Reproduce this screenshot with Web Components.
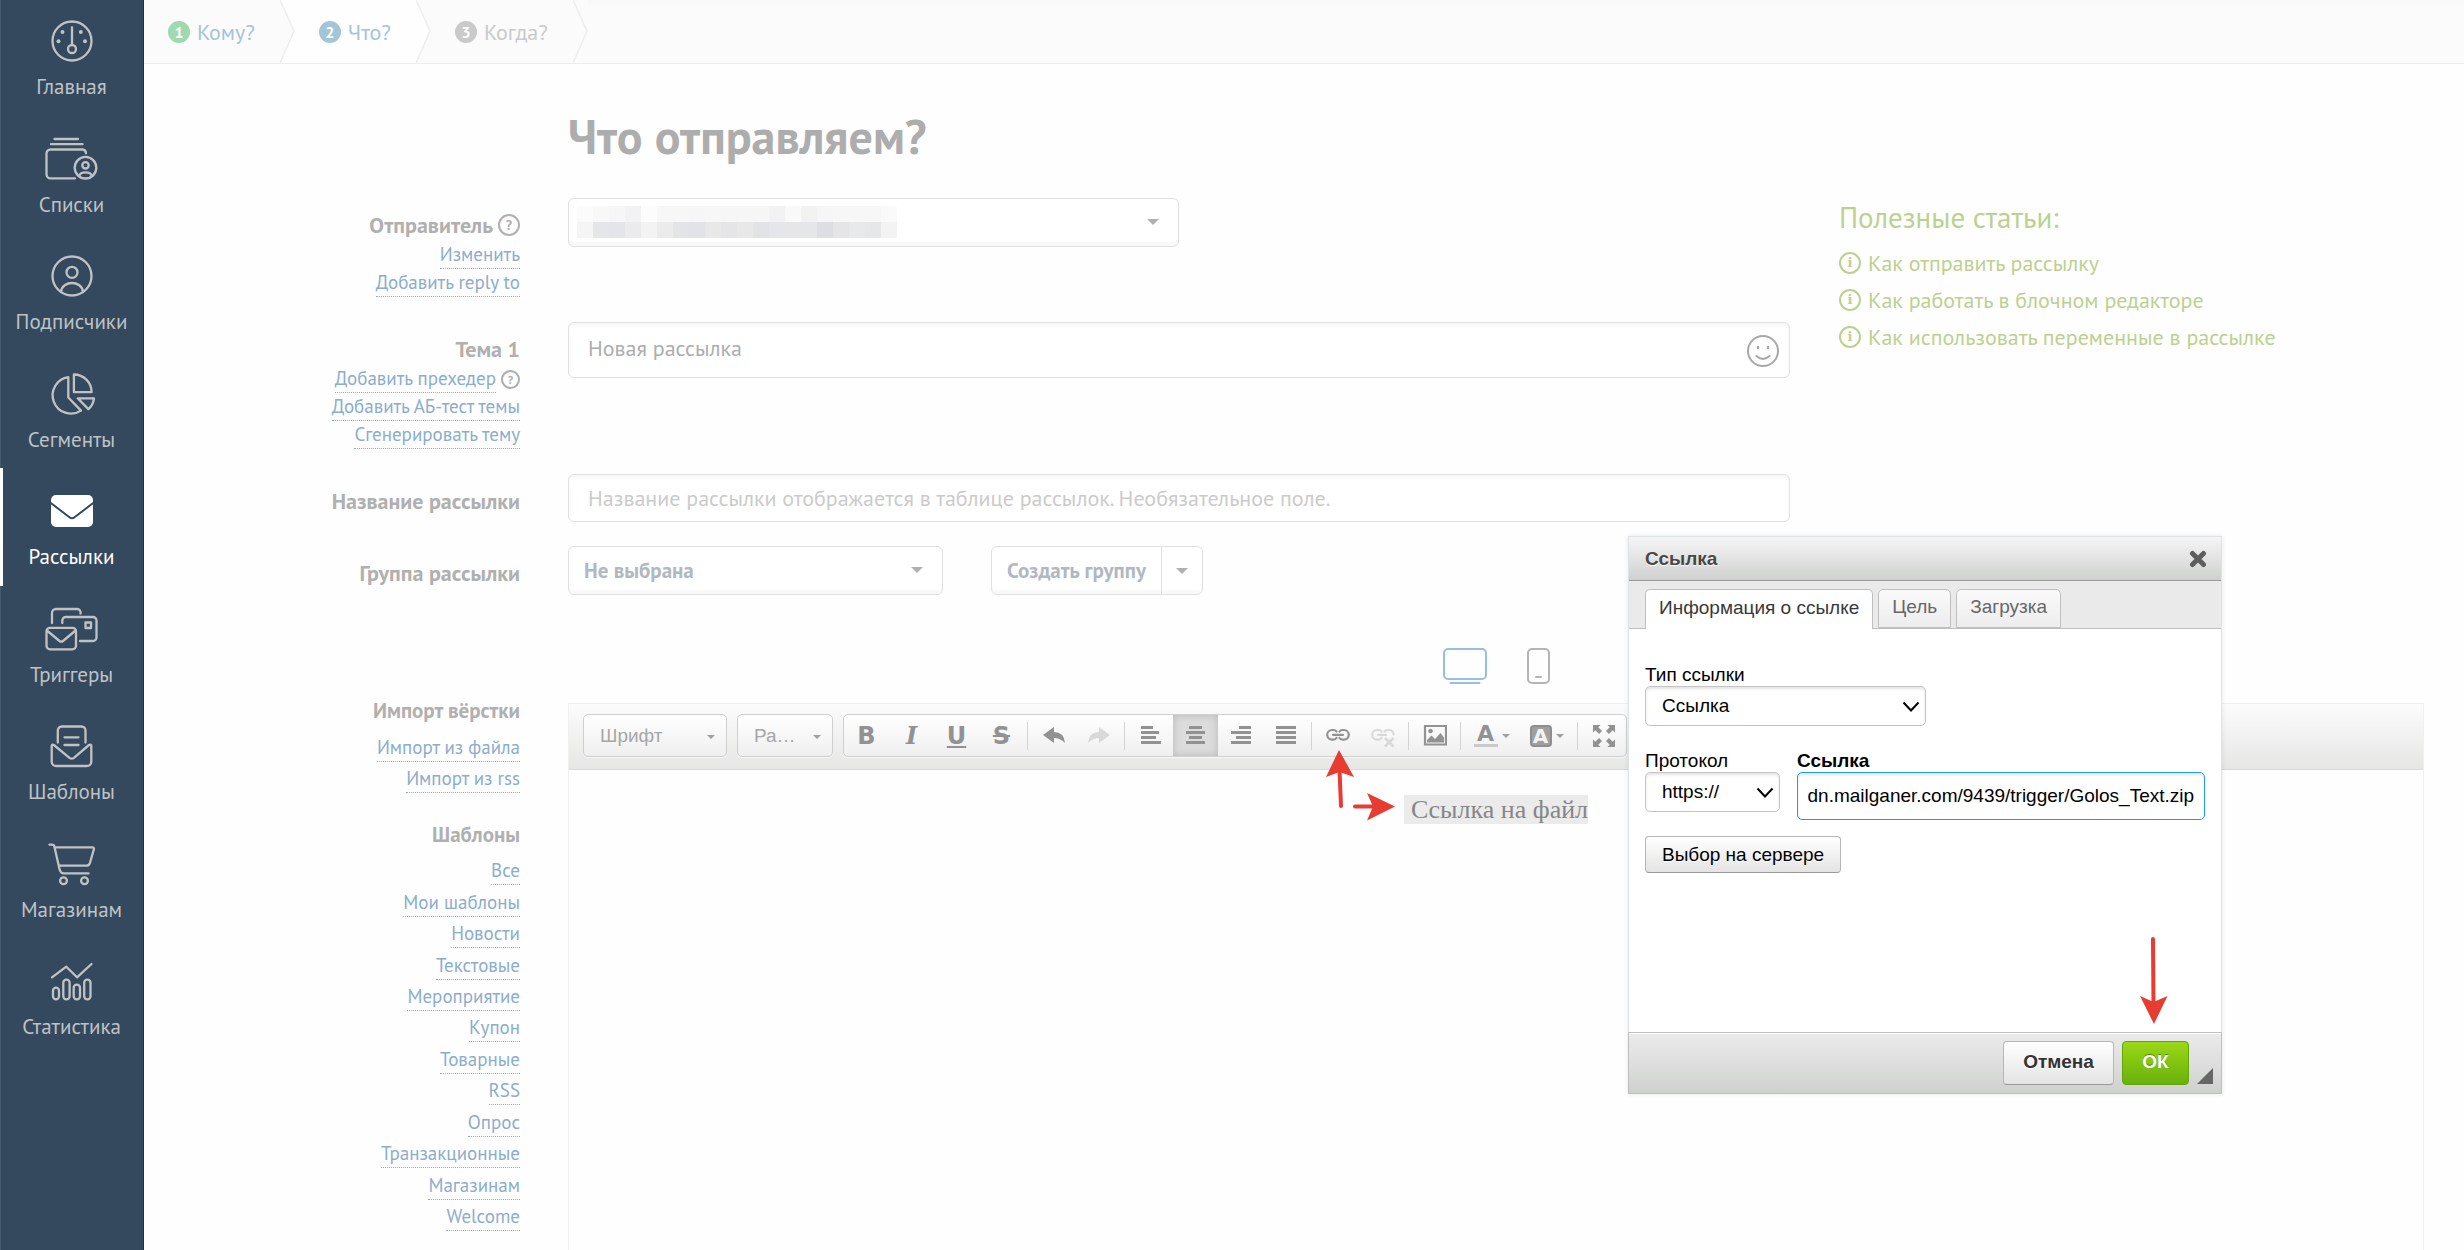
<!DOCTYPE html>
<html lang="ru">
<head>
<meta charset="utf-8">
<title>Что отправляем?</title>
<style>
  html, body { margin: 0; height: 100%; }
  body {
    overflow: hidden;
    background: #fefefe;
    color: #adadad;
    font-family: "PT Sans", "Open Sans", "Noto Sans", sans-serif;
    font-size: 21px;
  }
</style>
</head>
<body>
<mail-app></mail-app>

<script>
const define = (name, html, setup) => {
  const template = document.createElement('template');
  template.innerHTML = html;
  customElements.define(name, class extends HTMLElement {
    constructor() {
      super();
      this.attachShadow({ mode: 'open' }).append(template.content.cloneNode(true));
    }
    connectedCallback() { if (setup) setup(this, this.shadowRoot); }
  });
};

/* ---------- sidebar ---------- */
const navIcons = {
  home: '<circle cx="28" cy="23" r="19.5"/><path d="M28 9.5V27"/><circle cx="28" cy="31" r="4"/><g fill="currentColor" stroke="none"><circle cx="18.5" cy="14" r="2"/><circle cx="36.8" cy="14" r="2"/><circle cx="14.5" cy="23.3" r="2"/><circle cx="41" cy="23.3" r="2"/></g>',
  lists: '<path d="M10.500 3H34M7 8.200H38.500M31 42.300H6.500a4 4 0 0 1-4-4V17.500a4 4 0 0 1 4-4H38.500a4 4 0 0 1 3.500 3.800"/><circle cx="41.500" cy="31.700" r="10.800"/><circle cx="41.500" cy="29.300" r="3.200"/><path d="M35.500 39.500c1-4.200 11-4.200 12 0"/>',
  people: '<circle cx="28" cy="23" r="19.500"/><circle cx="28" cy="19.300" r="5.500"/><path d="M17 39c1-12 21-12 22 0"/>',
  segments: '<path d="M24.300 6.200V26.500L37 39.600A18.300 18.300 0 1 1 24.300 6.200z"/><path d="M29.900 3.500V21.200H47.600A17.700 17.700 0 0 0 29.900 3.500z"/><path d="M33.700 27.300H50a17 17 0 0 1-5.600 10.800z"/>',
  mail: '<rect x="7" y="7" width="42" height="32" rx="5" fill="currentColor" stroke="none"/><path d="M5.500 14L25.500 29.300q2.500 1.700 5 0L50.500 14" stroke="#34495e" stroke-width="2"/>',
  triggers: '<path d="M8 17V7a4 4 0 0 1 4-4H33a3.500 3.500 0 0 1 3.500 4.500M18.300 17V14.500a3.500 3.500 0 0 1 3.500-3.500H49a3.500 3.500 0 0 1 3.500 3.500V31.500a3.500 3.500 0 0 1-3.500 3.500H36"/><rect x="41.500" y="16.500" width="5.500" height="5.500"/><rect x="2.500" y="21.800" width="29.500" height="21.500" rx="3.500"/><path d="M3.500 25L15.500 35q1.800 1.300 3.500 0L31 25"/>',
  templates: '<path d="M13.800 19.500V7.500a4 4 0 0 1 4-4H37.500a4 4 0 0 1 4 4V19.500M20.500 14.300H34.500M20.500 22H34.500"/><path d="M7.700 23c0-1.500 1.200-1.800 2.200-1L25.500 34.800q2.200 1.700 4.400 0L45 22c1-.8 2.300-.5 2.300 1V38.500a4.500 4.500 0 0 1-4.500 4.500H12.200a4.500 4.500 0 0 1-4.500-4.500z"/>',
  shop: '<path d="M5.500 3.700H8c1.500 0 2.200.8 2.500 2.300L15.300 27.300c.8 4 2 5.100 4.500 5.100H44.500M11 6.300H48.500a1.500 1.500 0 0 1 1.400 2L46 21.800c-.7 2.200-1.500 2.900-3.500 2.900H15"/><circle cx="19.500" cy="39.700" r="3.400"/><circle cx="40.500" cy="39.700" r="3.400"/>',
  stats: '<path d="M8 19.300L22.300 8.700L33 19.300L47.500 6"/><rect x="9" y="29.700" width="6" height="11.600" rx="3"/><rect x="19.300" y="21.700" width="6.300" height="19.600" rx="3"/><rect x="29.700" y="26.700" width="6.300" height="14.600" rx="3"/><rect x="40.200" y="21.700" width="6.300" height="19.600" rx="3"/>'
};

define('nav-item', `
<style>
  :host { display: block; }
  a {
    box-sizing: border-box; height: 100%; padding-top: 20px;
    display: flex; flex-direction: column; align-items: center; gap: 11px;
    color: #bfc3c5; text-decoration: none; line-height: 24px;
  }
  svg { flex: none; width: 56px; height: 46px; fill: none; stroke: currentColor; stroke-width: 2.3; stroke-linecap: round; stroke-linejoin: round; }
  :host([active]) a { color: #fff; box-shadow: inset 3px 0 #fff; }
</style>
<a href="#"><svg viewBox="0 0 56 46" aria-hidden="true"></svg><slot></slot></a>`,
(host, root) => { root.querySelector('svg').innerHTML = navIcons[host.getAttribute('icon')]; });

define('app-sidebar', `
<style>
  :host { display: block; flex: none; width: 144px; box-sizing: border-box; background: #34495e; border-right: 1px solid #1f2f40; box-shadow: inset 1px 0 #475b6f; overflow: hidden; }
  nav { display: grid; grid-template-rows: repeat(9, 1fr); height: 1058px; margin-top: -2px; }
</style>
<nav aria-label="Разделы">
  <nav-item icon="home">Главная</nav-item>
  <nav-item icon="lists">Списки</nav-item>
  <nav-item icon="people">Подписчики</nav-item>
  <nav-item icon="segments">Сегменты</nav-item>
  <nav-item icon="mail" active>Рассылки</nav-item>
  <nav-item icon="triggers">Триггеры</nav-item>
  <nav-item icon="templates">Шаблоны</nav-item>
  <nav-item icon="shop">Магазинам</nav-item>
  <nav-item icon="stats">Статистика</nav-item>
</nav>`);

/* ---------- wizard steps ---------- */
define('wizard-step', `
<style>
  :host { display: flex; align-items: stretch; height: 63px; --ink: #a3c5d9; --badge: var(--ink); --fill: #fbfbfb; background: var(--fill); }
  :host([state="done"]) { --badge: #9ed9b0; }
  :host([state="current"]) { --fill: #fefefe; }
  :host([state="next"]) { --ink: #cacaca; }
  a { display: flex; align-items: center; gap: 7px; padding: 0 25px 0 24px; color: var(--ink); text-decoration: none; font-size: 22px; }
  b { width: 22px; height: 22px; border-radius: 50%; background: var(--badge); color: #fff; font-size: 16px; line-height: 22px; text-align: center; }
  svg { flex: none; width: 15px; height: 63px; background: var(--after, #fbfbfb); }
  :host([state="done"]) { --after: #fefefe; }
  path { fill: var(--fill); stroke: #ededed; stroke-width: 1.5; }
</style>
<a href="#"><b></b><slot></slot></a>
<svg viewBox="0 0 15 63" aria-hidden="true"><path d="M-2 -2L0 0L14 31L0 63L-2 65"/></svg>`,
(host, root) => { root.querySelector('b').textContent = host.getAttribute('number'); });

define('wizard-steps', `
<style>
  :host { display: block; background: linear-gradient(#f7f7f7, #fbfbfb 8px); border-bottom: 1px solid #eee; }
  nav { display: flex; }
</style>
<nav aria-label="Шаги">
  <wizard-step number="1" state="done">Кому?</wizard-step>
  <wizard-step number="2" state="current">Что?</wizard-step>
  <wizard-step number="3" state="next">Когда?</wizard-step>
</nav>`);

/* ---------- small shared parts ---------- */
define('dotted-link', `
<style>
  :host { display: flex; justify-content: flex-end; align-items: flex-end; gap: 5px; height: 28px; }
  a { color: #8cadcd; text-decoration: none; line-height: 27px; border-bottom: 1px dotted #8cadcd; font-size: 19px; white-space: nowrap; }
</style>
<a href="#"><slot></slot></a><slot name="after"></slot>`);

define('round-mark', `
<style>
  :host { display: inline-flex; flex: none; box-sizing: border-box; width: 22px; height: 22px; border: 2px solid currentColor; border-radius: 50%; align-items: center; justify-content: center; font-size: 14px; line-height: 18px; font-weight: 700; }
  :host([small]) { width: 19px; height: 19px; font-size: 12px; line-height: 15px; align-self: center; }
  :host([serif]) { font-family: "DejaVu Serif", serif; font-size: 13px; }
</style>
<slot></slot>`);

define('field-row', `
<style>
  :host { display: flex; gap: 48px; }
  .side { flex: none; box-sizing: border-box; width: 376px; padding: 11px 0 1px; }
  .main { flex: 1; min-width: 0; display: flex; align-items: flex-start; gap: 48px; }
</style>
<div class="side"><slot name="label"></slot><slot name="links"></slot></div>
<div class="main"><slot></slot></div>`);

/* ---------- help ---------- */
define('help-links', `
<style>
  :host { display: block; color: #bcd18f; padding-top: 1px; }
  h2 { margin: 0 0 9px; font-size: 29px; line-height: 36px; font-weight: 400; }
  a { display: flex; align-items: center; gap: 7px; height: 37px; color: inherit; text-decoration: none; font-size: 22px; }
</style>
<h2>Полезные статьи:</h2>
<a href="#"><round-mark serif>i</round-mark>Как отправить рассылку</a>
<a href="#"><round-mark serif>i</round-mark>Как работать в блочном редакторе</a>
<a href="#"><round-mark serif>i</round-mark>Как использовать переменные в рассылке</a>`);

/* ---------- form ---------- */
define('campaign-form', `
<style>
  :host { display: flex; flex-direction: column; gap: 24px; }
  label { display: flex; justify-content: flex-end; align-items: center; gap: 5px; font-weight: 700; font-size: 22px; line-height: 32px; color: #b0b0b0; }
  input, select, button { font: inherit; color: inherit; margin: 0; box-sizing: border-box; }
  input { width: 100%; height: 48px; padding: 0 19px; border: 1px solid #e0e0e0; border-radius: 6px; background: #fff; box-shadow: inset 0 3px 3px #f7f7f7; font-size: 22px; outline: 0; }
  input::placeholder { color: #cbcbcb; opacity: 1; }
  .box { position: relative; color: #b0b8c2; font-weight: 700; }
  .box select, .split { box-sizing: border-box; width: 100%; height: 49px; border: 1px solid #e0e0e0; border-radius: 6px; background: #fff; box-shadow: inset 0 -4px #f9f9f9; }
  .box select { appearance: none; padding: 0 15px; font-size: 21px; }
  .box::after, .more::after { content: ""; border: 6px solid transparent; border-top-color: #b0b0b0; border-bottom: 0; }
  .box::after { position: absolute; right: 20px; top: 21px; pointer-events: none; }
  .sender { width: 50%; }
  .group { width: 375px; }
  .mosaic { position: absolute; left: 9px; top: 8px; width: 320px; height: 32px; }
  .subject { position: relative; width: 100%; }
  .subject input { height: 56px; padding-bottom: 4px; }
  .subject button { position: absolute; right: 10px; top: 12px; width: 34px; height: 34px; padding: 0; border: 0; background: none; color: #a8a8a8; }
  .split { display: flex; width: 212px; color: #b0b8c2; }
  .split button { border: 0; background: none; font-weight: 700; font-size: 21px; padding: 0; white-space: nowrap; }
  .create { flex: 1; }
  .split .more { width: 41px; border-left: 1px solid #e0e0e0; display: flex; align-items: center; justify-content: center; }
</style>
<field-row>
  <label slot="label" for="sender">Отправитель <round-mark>?</round-mark></label>
  <dotted-link slot="links">Изменить</dotted-link>
  <dotted-link slot="links">Добавить reply to</dotted-link>
  <div class="box sender"><select id="sender"><option></option></select><svg class="mosaic" viewBox="0 0 20 2" shape-rendering="crispEdges" aria-hidden="true"></svg></div>
</field-row>
<field-row>
  <label slot="label" for="subject">Тема 1</label>
  <dotted-link slot="links">Добавить прехедер<round-mark slot="after" small>?</round-mark></dotted-link>
  <dotted-link slot="links">Добавить АБ-тест темы</dotted-link>
  <dotted-link slot="links">Сгенерировать тему</dotted-link>
  <div class="subject"><input id="subject" value="Новая рассылка"><button aria-label="Эмодзи"><svg viewBox="0 0 34 34" width="34" height="34" fill="none" stroke="currentColor" stroke-width="2" stroke-linecap="round"><circle cx="17" cy="17" r="15"/><path d="M10.500 22q6.500 6 13 0"/><path stroke-width="2.500" d="M12 13v1M22 13v1"/></svg></button></div>
</field-row>
<field-row>
  <label slot="label" for="name">Название рассылки</label>
  <input id="name" placeholder="Название рассылки отображается в таблице рассылок. Необязательное поле.">
</field-row>
<field-row>
  <label slot="label" for="group">Группа рассылки</label>
  <div class="box group"><select id="group"><option>Не выбрана</option></select></div>
  <div class="split"><button class="create">Создать группу</button><button class="more" aria-label="Ещё"></button></div>
</field-row>`,
(host, root) => {
  const rows = [
    ['#fbfbfb','#f8f8f8','#f6f6f6','#f2f2f5','#fcfcfc','#f7f7f7','#f7f7f7','#f6f6f6','#f7f7f7','#f6f6f6','#f6f6f6','#f6f6f6','#f2f2f3','#f9f9f9','#f2f2f2','#f6f6f6','#f7f7f7','#f7f7f7','#f7f7f7','#fafafa'],
    ['#f5f5f5','#e5e6ea','#e4e5e8','#ebebed','#f3f3f3','#ebebec','#e3e4e7','#e2e3e7','#e8e8e9','#e5e5e7','#e8e8e9','#e2e3e7','#e5e6e9','#e6e6e8','#e5e6e9','#dddee1','#e5e5e7','#e8e9ea','#e6e7e9','#f3f3f3']
  ];
  root.querySelector('.mosaic').innerHTML = rows.map((r, y) => r.map((c, x) => `<rect x="${x}" y="${y}" width="1" height="1" fill="${c}"/>`).join('')).join('');
});

/* ---------- template list ---------- */
define('template-list', `
<style>
  :host { display: block; text-align: right; }
  h3 { margin: 0 0 5px; font-size: 21px; line-height: 28px; color: #b0b0b0; }
  div { display: grid; grid-auto-rows: 1fr; align-items: end; }
  .import { height: 63px; margin-bottom: 28px; }
  .all { height: 377px; }
</style>
<h3>Импорт вёрстки</h3>
<div class="import">
  <dotted-link>Импорт из файла</dotted-link>
  <dotted-link>Импорт из rss</dotted-link>
</div>
<h3>Шаблоны</h3>
<div class="all">
  <dotted-link>Все</dotted-link>
  <dotted-link>Мои шаблоны</dotted-link>
  <dotted-link>Новости</dotted-link>
  <dotted-link>Текстовые</dotted-link>
  <dotted-link>Мероприятие</dotted-link>
  <dotted-link>Купон</dotted-link>
  <dotted-link>Товарные</dotted-link>
  <dotted-link>RSS</dotted-link>
  <dotted-link>Опрос</dotted-link>
  <dotted-link>Транзакционные</dotted-link>
  <dotted-link>Магазинам</dotted-link>
  <dotted-link>Welcome</dotted-link>
</div>`);

/* ---------- editor ---------- */
const bars = (rows) => rows.map(([a, b], i) => `<path d="M${a} ${3.5 + i * 5}H${b}" stroke="currentColor" stroke-width="3"/>`).join('');
const toolIcons = {
  undo: '<path fill="currentColor" d="M1 11L12 3V8Q22 8 23 19Q18 14 12 14V19z"/>',
  redo: '<path fill="currentColor" d="M23 11L12 3V8Q2 8 1 19Q6 14 12 14V19z"/>',
  left: bars([[2, 14], [2, 20], [2, 17], [2, 22]]),
  center: bars([[5, 18], [2, 21], [5, 18], [2, 21]]),
  right: bars([[10, 22], [2, 22], [7, 22], [2, 22]]),
  justify: bars([[2, 22], [2, 22], [2, 22], [2, 22]]),
  link: '<g fill="none" stroke="currentColor" stroke-width="2.200" stroke-linecap="round"><path d="M10.500 7.500Q9.500 6 7.500 6H6a4.800 4.800 0 0 0 0 9.600H7.500Q9.500 15.600 10.500 14"/><path d="M13.500 7.500Q14.500 6 16.500 6H18a4.800 4.800 0 0 1 0 9.600H16.500Q14.500 15.600 13.500 14"/><path d="M7 10.800H17"/></g>',
  unlink: '<g fill="none" stroke="currentColor" stroke-width="2.200" stroke-linecap="round"><path d="M10.500 7.500Q9.500 6 7.500 6H6a4.800 4.800 0 0 0 0 9.600H7.500Q9.500 15.600 10.500 14"/><path d="M13.500 7.500Q14.500 6 16.500 6H18a4.800 4.800 0 0 1 4.500 4.500M7 10.800H15"/><path stroke-width="2.800" stroke-linecap="butt" d="M14 14L22.500 22.500M22.500 14L14 22.500"/></g>',
  image: '<path fill="none" stroke="currentColor" stroke-width="2.200" d="M2 2H23V20.500H2z"/><path fill="currentColor" d="M4 18.500V16L8.500 11.500L12 15L17.500 9L21 13.500V18.500z"/><circle cx="7.500" cy="7" r="2.300" fill="currentColor"/>',
  max: '<g fill="currentColor"><path d="M1 1H8.500L6.300 3.300L10 7L7 10L3.300 6.300L1 8.500z"/><path d="M23 1V8.500L20.700 6.300L17 10L14 7L17.700 3.300L15.500 1z"/><path d="M1 23V15.500L3.300 17.700L7 14L10 17L6.300 20.700L8.500 23z"/><path d="M23 23H15.500L17.700 20.700L14 17L17 14L20.700 17.700L23 15.500z"/></g>'
};

define('tool-button', `
<style>
  :host { display: block; flex: none; width: 45px; height: 41px; color: #929292; }
  :host([wide]) { width: 55px; }
  :host([pressed]) button { background: #dcdcdc; box-shadow: inset 0 0 8px #b8b8b8; }
  :host([off]) { color: #d9d9d9; }
  button { width: 100%; height: 100%; padding: 0; border: 0; background: none; color: inherit; display: flex; align-items: center; justify-content: center; gap: 4px; font: 700 24px/26px "DejaVu Sans", sans-serif; }
  svg { width: 24px; height: 24px; }
  :host([wide]) button::after { content: ""; border: 4px solid transparent; border-top-color: #a0a0a0; border-bottom: 0; }
</style>
<button><slot></slot></button>`,
(host, root) => {
  const icon = host.getAttribute('icon');
  root.querySelector('button').setAttribute('aria-label', host.getAttribute('icon') || host.textContent);
  if (icon) root.querySelector('slot').outerHTML = `<svg viewBox="0 0 24 24">${toolIcons[icon]}</svg>`;
});

define('rich-editor', `
<style>
  :host { display: flex; flex-direction: column; border: 1px solid #f0f0f0; border-bottom: 0; }
  .bar { flex: none; box-sizing: border-box; height: 66px; padding: 10px 14px; display: flex; align-items: flex-start; gap: 10px; background: linear-gradient(#fcfcfc, #e6e6e5); border-bottom: 1px solid #d8d8d8; font-family: "Liberation Sans", Arial, sans-serif; }
  .combo, .tools { box-sizing: border-box; height: 43px; border: 1px solid #cfcfcf; border-radius: 5px; background: linear-gradient(#fff, #efefef); box-shadow: 0 1px #f8f8f8; }
  .combo { position: relative; width: 144px; }
  .combo.size { width: 96px; }
  .combo select { appearance: none; width: 100%; height: 100%; border: 0; margin: 0; padding: 0 16px; background: none; font: inherit; font-size: 19px; color: #a6a6a6; }
  .combo::after { content: ""; position: absolute; right: 11px; top: 20px; border: 4px solid transparent; border-top-color: #a0a0a0; border-bottom: 0; }
  .tools { display: flex; }
  .tools hr { flex: none; width: 1px; height: 28px; margin: 7px 3px; border: 0; background: #d4d4d4; }
  i { font-family: "DejaVu Serif", serif; }
  .fore { width: 24px; line-height: 20px; border-bottom: 3px solid #cacaca; font-size: 22px; text-align: center; }
  .back { background: #a0a0a0; color: #f2f2f2; border: 2px solid #8e8e8e; border-radius: 4px; width: 18px; height: 18px; line-height: 18px; font-size: 20px; text-align: center; }
  .page { flex: 1; padding-top: 25px; text-align: center; font: 26px/30px "Liberation Serif", "Times New Roman", serif; color: #868686; }
  mark { background: #ebebeb; color: inherit; padding-left: 7px; }
</style>
<div class="bar">
  <div class="combo"><select aria-label="Шрифт"><option>Шрифт</option></select></div>
  <div class="combo size"><select aria-label="Размер"><option>Ра…</option></select></div>
  <div class="tools">
    <tool-button>B</tool-button><tool-button><i>I</i></tool-button><tool-button><u>U</u></tool-button><tool-button><s>S</s></tool-button><hr>
    <tool-button icon="undo"></tool-button><tool-button icon="redo" off></tool-button><hr>
    <tool-button icon="left"></tool-button><tool-button icon="center" pressed></tool-button><tool-button icon="right"></tool-button><tool-button icon="justify"></tool-button><hr>
    <tool-button icon="link"></tool-button><tool-button icon="unlink" off></tool-button><hr>
    <tool-button icon="image"></tool-button><hr>
    <tool-button wide><span class="fore">A</span></tool-button><tool-button wide><span class="back">A</span></tool-button><hr>
    <tool-button icon="max"></tool-button>
  </div>
</div>
<div class="page"><mark>Ссылка на файл</mark></div>`);

define('device-switch', `
<style>
  :host { display: flex; justify-content: center; gap: 40px; height: 36px; }
  button { padding: 0; border: 0; background: none; color: #b5b5b5; height: 36px; }
  .on { color: #97bfe0; }
  svg { display: block; height: 36px; fill: none; stroke: currentColor; stroke-width: 2; stroke-linecap: round; }
</style>
<button class="on" aria-label="Компьютер"><svg width="44" viewBox="0 0 44 36"><rect x="1" y="1" width="42" height="30" rx="4"/><path d="M7.500 35H36.500"/></svg></button>
<button aria-label="Телефон"><svg width="23" viewBox="0 0 23 36"><rect x="1" y="1" width="21" height="34" rx="4"/><path d="M9 29H14"/></svg></button>`);

/* ---------- dialog ---------- */
define('link-dialog', `
<style>
  :host { display: flex; flex-direction: column; box-sizing: border-box; border: 1px solid #dfe2e6; background: #fff; color: #000; font: 19px/22px "Liberation Sans", Arial, sans-serif; box-shadow: 0 0 5px rgba(0,0,0,.09); }
  header { display: flex; align-items: center; justify-content: space-between; height: 43px; padding: 0 14px 0 16px; border-bottom: 1px solid #999; background: linear-gradient(#f5f5f5, #cfd1cf); color: #474747; font-weight: 700; text-shadow: 0 1px #fff; }
  button, input, select { font: inherit; margin: 0; box-sizing: border-box; }
  .close { width: 18px; height: 18px; padding: 0; border: 0; background: none; }
  .close svg { display: block; }
  .tabs { display: flex; align-items: flex-end; gap: 5px; height: 47px; padding: 0 16px; background: #eaeaea; border-bottom: 1px solid #bfbfbf; }
  .tabs button { height: 39px; padding: 0 13px 3px; border: 1px solid #bfbfbf; border-radius: 5px 5px 0 0; background: linear-gradient(#fafafa, #ededed); color: #676767; }
  .tabs .on { height: 40px; margin-bottom: -1px; background: #fff; border-bottom: 0; color: #383838; }
  .body { flex: 1; padding: 35px 16px 0; display: flex; flex-direction: column; align-items: flex-start; }
  label { display: block; height: 22px; white-space: nowrap; }
  .pick { position: relative; }
  .pick select { appearance: none; width: 100%; height: 40px; padding: 0 16px; border: 1px solid #c4c4c4; border-radius: 5px; background: #fff; color: #000; box-shadow: inset 0 2px 3px #e4e4e4; }
  .pick svg { position: absolute; right: 6px; top: 15px; pointer-events: none; }
  .type { width: 281px; }
  .proto { width: 135px; }
  .row { display: flex; align-items: flex-start; gap: 17px; align-self: stretch; margin: 24px 0 16px; }
  .url { flex: 1; min-width: 0; }
  .url label { font-weight: 700; }
  .url input { display: block; width: 100%; height: 48px; padding: 0 10px; border: 1px solid #1f9bf0; border-radius: 5px; background: #fff; color: #000; outline: 0; box-shadow: inset 0 2px 3px #e4e4e4; }
  .soft { height: 37px; padding: 0 16px; border: 1px solid #b6b6b6; border-bottom-color: #999; border-radius: 4px; background: linear-gradient(#fff, #e4e4e4); color: #000; text-shadow: 0 1px #fff; }
  footer { box-sizing: border-box; position: relative; height: 62px; padding: 8px 32px 0; display: flex; justify-content: flex-end; gap: 8px; border: 1px solid #bfbfbf; margin: 0 -1px -1px; background: linear-gradient(#ebebeb, #cfd1cf); box-shadow: inset 0 1px #fff; }
  footer .soft { width: 111px; height: 44px; color: #333; font-weight: 700; padding: 0 0 3px; }
  footer .ok { width: 67px; border-color: #62a60a; background: linear-gradient(#9ad717, #69b10b); color: #fff; text-shadow: 0 -1px #55830c; }
  footer::after { content: ""; position: absolute; right: 8px; bottom: 9px; border-left: 16px solid transparent; border-bottom: 16px solid #666; }
</style>
<header>Ссылка<button class="close" aria-label="Закрыть"><svg width="18" height="18" viewBox="0 0 18 18"><path d="M3.500 3.500L14.500 14.500M14.500 3.500L3.500 14.500" stroke="#5e5e5e" stroke-width="5" stroke-linecap="round"/></svg></button></header>
<div class="tabs"><button class="on">Информация о ссылке</button><button>Цель</button><button>Загрузка</button></div>
<div class="body">
  <div class="type"><label for="type">Тип ссылки</label><div class="pick"><select id="type"><option>Ссылка</option></select><svg width="18" height="11" viewBox="0 0 18 11"><path d="M1.500 1.500L9 9.500L16.500 1.500" fill="none" stroke="#000" stroke-width="2"/></svg></div></div>
  <div class="row">
    <div class="proto"><label for="proto">Протокол</label><div class="pick"><select id="proto"><option>https://</option></select><svg width="18" height="11" viewBox="0 0 18 11"><path d="M1.500 1.500L9 9.500L16.500 1.500" fill="none" stroke="#000" stroke-width="2"/></svg></div></div>
    <div class="url"><label for="url">Ссылка</label><input id="url" value="cdn.mailganer.com/9439/trigger/Golos_Text.zip"></div>
  </div>
  <button class="soft">Выбор на сервере</button>
</div>
<footer><button class="soft">Отмена</button><button class="soft ok">ОК</button></footer>`,
(host, root) => { const url = root.querySelector('#url'); url.scrollLeft = url.scrollWidth; });

/* ---------- pointers over the page ---------- */
define('red-pointers', `
<style>
  :host { display: block; pointer-events: none; color: #e63c31; }
  svg { position: absolute; fill: currentColor; stroke: currentColor; stroke-linecap: round; }
  .pair { left: 1324px; top: 748px; }
  .down { left: 2138px; top: 935px; }
</style>
<svg class="pair" width="74" height="76" viewBox="0 0 74 76"><path d="M17 58L15.500 22M31 58.500H52" stroke-width="4"/><path stroke="none" d="M15 2L30 29L15.500 24L2 29zM71 58.500L43 72.500L49 58.500L43 45z"/></svg>
<svg class="down" width="32" height="92" viewBox="0 0 32 92"><path d="M15 4L15.500 70" stroke-width="4"/><path stroke="none" d="M16 89L2 61L15.500 67L29.500 61z"/></svg>`);

/* ---------- page ---------- */
define('mail-app', `
<style>
  :host { display: flex; height: 100vh; position: relative; overflow: hidden; }
  main { flex: 1; min-width: 0; display: flex; flex-direction: column; }
  .content { flex: 1; display: flex; flex-direction: column; padding: 42px 40px 0 0; }
  h1 { margin: 0 0 32px 424px; font-size: 48px; line-height: 60px; color: #adadad; }
  .top { display: flex; gap: 49px; }
  campaign-form { flex: 1; min-width: 0; }
  help-links { flex: none; width: 585px; }
  .work { flex: 1; display: flex; gap: 48px; margin-top: 53px; }
  template-list { flex: none; width: 376px; padding-top: 49px; }
  .edit { flex: 1; min-width: 0; display: flex; flex-direction: column; gap: 19px; }
  rich-editor { flex: 1; }
  link-dialog { position: absolute; left: 1628px; top: 536px; width: 594px; height: 558px; }
</style>
<app-sidebar></app-sidebar>
<main>
  <wizard-steps></wizard-steps>
  <div class="content">
    <h1>Что отправляем?</h1>
    <div class="top"><campaign-form></campaign-form><help-links></help-links></div>
    <div class="work">
      <template-list></template-list>
      <div class="edit"><device-switch></device-switch><rich-editor></rich-editor></div>
    </div>
  </div>
</main>
<link-dialog></link-dialog>
<red-pointers></red-pointers>`);
</script>
</body>
</html>
